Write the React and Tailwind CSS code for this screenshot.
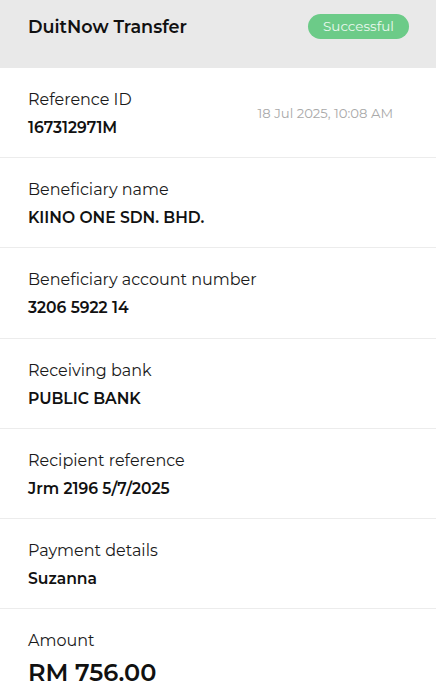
const ROWS = [
  { label: 'Beneficiary name', value: 'KIINO ONE SDN. BHD.' },
  { label: 'Beneficiary account number', value: '3206 5922 14' },
  { label: 'Receiving bank', value: 'PUBLIC BANK' },
  { label: 'Recipient reference', value: 'Jrm 2196 5/7/2025' },
  { label: 'Payment details', value: 'Suzanna' },
]

function Row({ label, value, right }) {
  return (
    <div className="h-[90.2px] flex items-start justify-between px-7 pt-[20px] border-b border-[#ececec]">
      <div>
        <p className="text-[16px] leading-6 text-[#1a1a1a]">{label}</p>
        <p className="mt-[4px] text-[15.6px] leading-6 font-semibold text-[#111]">{value}</p>
      </div>
      {right}
    </div>
  )
}

export default function App() {
  return (
    <div className="w-[436px] h-[700px] overflow-hidden bg-white font-['Montserrat','DejaVu_Sans',sans-serif]">
      {/* header */}
      <div className="h-[68px] bg-[#e9e9e9] flex items-start justify-between pl-7 pr-[27px] pt-[14px]">
        <h1 className="text-[17.6px] leading-[25px] font-semibold text-[#111]">DuitNow Transfer</h1>
        <span className="h-[25px] w-[101px] rounded-full bg-[#6ccb88] text-[#e9f8ee] text-[13.5px] flex items-center justify-center">
          Successful
        </span>
      </div>

      <Row
        label="Reference ID"
        value="167312971M"
        right={<span className="mt-[15px] text-[13.2px] leading-5 text-[#a9a9a9] pr-[15px]">18 Jul 2025, 10:08 AM</span>}
      />
      {ROWS.map((r, i) => (
        <Row key={i} label={r.label} value={r.value} />
      ))}

      {/* amount */}
      <div className="px-7 pt-[20px]">
        <p className="text-[16px] leading-6 text-[#1a1a1a]">Amount</p>
        <p className="mt-[4px] text-[24px] leading-8 font-semibold text-[#111]">RM 756.00</p>
      </div>
    </div>
  )
}
